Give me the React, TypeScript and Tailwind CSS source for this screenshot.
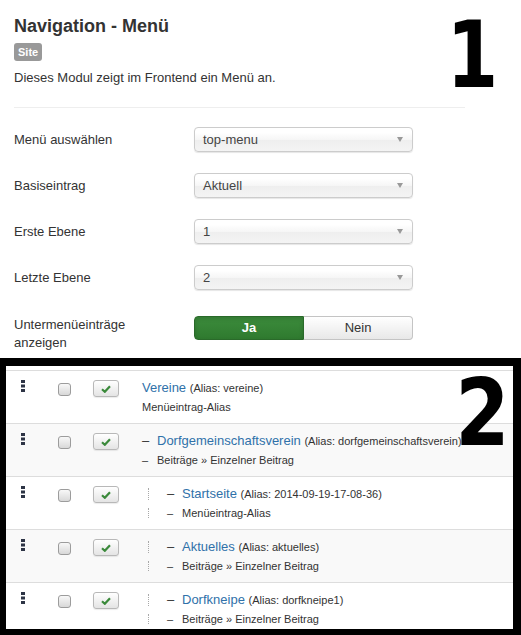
import React from "react";

type Row = {
  level: number;
  title: string;
  alias: string;
  type: string;
  striped: boolean;
};

const rows: Row[] = [
  { level: 1, title: "Vereine", alias: "vereine", type: "Menüeintrag-Alias", striped: false },
  { level: 2, title: "Dorfgemeinschaftsverein", alias: "dorfgemeinschaftsverein", type: "Beiträge » Einzelner Beitrag", striped: true },
  { level: 3, title: "Startseite", alias: "2014-09-19-17-08-36", type: "Menüeintrag-Alias", striped: false },
  { level: 3, title: "Aktuelles", alias: "aktuelles", type: "Beiträge » Einzelner Beitrag", striped: true },
  { level: 3, title: "Dorfkneipe", alias: "dorfkneipe1", type: "Beiträge » Einzelner Beitrag", striped: false },
];

function Select({ value }: { value: string }) {
  return (
    <div className="flex h-[25px] w-[219px] items-center rounded-[4px] border border-[#cccccc] bg-[linear-gradient(#ffffff_20%,#f6f6f6_50%,#eeeeee_52%,#f4f4f4_100%)] pl-[8px] pr-[9px] text-[13px] text-[#444444] shadow-[0_1px_1px_rgba(0,0,0,0.1)]">
      <span>{value}</span>
      <span className="ml-auto h-0 w-0 border-l-[3.5px] border-r-[3.5px] border-t-[5px] border-l-transparent border-r-transparent border-t-[#999999]" />
    </div>
  );
}

function Prefix({ level, small }: { level: number; small: boolean }) {
  if (level === 1) return null;
  const dash = (
    <span className={`inline-block w-[15px] text-[#333333] ${small ? "text-[11px]" : "text-[13px]"}`}>–</span>
  );
  if (level === 2) return dash;
  return (
    <>
      <span className="flex w-[25px] items-center pl-[6px]">
        <span className={`inline-block border-l border-dotted border-[#a8a8a8] ${small ? "h-[10px]" : "h-[12px]"}`} />
      </span>
      {dash}
    </>
  );
}

function Handle() {
  return (
    <svg width="4" height="12" viewBox="0 0 4 12">
      <rect x="0" y="0" width="4" height="3" fill="#2d3445" />
      <rect x="0" y="4.5" width="4" height="3" fill="#2d3445" />
      <rect x="0" y="9" width="4" height="3" fill="#2d3445" />
    </svg>
  );
}

function TableRow({ r }: { r: Row }) {
  return (
    <div className={`flex h-[53px] shrink-0 border-t border-[#dddddd] ${r.striped ? "bg-[#f9f9f9]" : "bg-white"}`}>
      <div className="ml-[15px] mt-[9px] h-[12px]">
        <Handle />
      </div>
      <div className="ml-[33px] mt-[12px] h-[13px] w-[13px] rounded-[3px] border border-[#9c9c9c] bg-[linear-gradient(#f8f8f8,#d8d8d8)]" />
      <div className="ml-[22px] mt-[9px] flex h-[17px] w-[26px] items-center justify-center rounded-[3px] border border-[#b8b8b8] bg-[linear-gradient(#ffffff,#e4e4e4)] shadow-[0_1px_1px_rgba(0,0,0,0.08)]">
        <svg width="10" height="8" viewBox="0 0 10 8">
          <path d="M1 4.3 L3.8 6.8 L9 1.2" fill="none" stroke="#3b8a3b" strokeWidth="2.2" />
        </svg>
      </div>
      <div className="ml-[23px] whitespace-nowrap pt-[7px]">
        <div className="flex h-[20px] items-center">
          <Prefix level={r.level} small={false} />
          <span className="leading-[20px]">
            <span className="text-[13px] text-[#3071a9]">{r.title}</span>{" "}
            <span className="text-[11px] text-[#333333]">(Alias: {r.alias})</span>
          </span>
        </div>
        <div className="flex h-[18px] items-center">
          <Prefix level={r.level} small={true} />
          <span className="text-[11px] leading-[18px] text-[#333333]">{r.type}</span>
        </div>
      </div>
    </div>
  );
}

export default function App() {
  const fields = [
    { label: "Menü auswählen", value: "top-menu" },
    { label: "Basiseintrag", value: "Aktuell" },
    { label: "Erste Ebene", value: "1" },
    { label: "Letzte Ebene", value: "2" },
  ];
  return (
    <div className="relative h-[635px] w-[521px] overflow-hidden bg-white font-['Liberation_Sans',Arial,sans-serif] text-[13px] text-[#333333]">
      <div className="px-[14px] pt-[16px]">
        <h1 className="text-[18px] font-bold leading-[20px] text-[#333333]">Navigation - Menü</h1>
        <div className="mt-[7px] flex h-[18px] w-fit items-center rounded-[3px] bg-[#999999] px-[4px] text-[11px] font-bold text-white">
          Site
        </div>
        <p className="mt-[8px] leading-[18px]">Dieses Modul zeigt im Frontend ein Menü an.</p>
        <div className="mt-[20px] w-[451px] border-t border-[#eeeeee]" />
        <div className="mt-[19px] flex flex-col">
          {fields.map((f) => (
            <div key={f.label} className="mb-[21px] flex h-[25px] items-center">
              <div className="w-[180px]">{f.label}</div>
              <Select value={f.value} />
            </div>
          ))}
          <div className="mt-[5px] flex items-start">
            <div className="w-[180px] leading-[18px]">
              Untermenüeinträge
              <br />
              anzeigen
            </div>
            <div className="flex h-[24px]">
              <div className="flex w-[110px] items-center justify-center rounded-l-[4px] border border-[#2a6a2a] bg-[linear-gradient(#3c8c3c,#2f7a2f)] text-[13px] font-bold text-white shadow-[inset_0_2px_4px_rgba(0,0,0,0.15)]">
                Ja
              </div>
              <div className="flex w-[109px] items-center justify-center rounded-r-[4px] border border-l-0 border-[#c4c4c4] bg-[linear-gradient(#ffffff,#e8e8e8)] text-[13px] text-[#333333]">
                Nein
              </div>
            </div>
          </div>
        </div>
      </div>

      <div className="mt-[6px] h-[277px] border-b-[6px] border-l-[6px] border-r-[8px] border-t-[8px] border-black">
        <div className="flex h-full flex-col overflow-hidden bg-white pt-[4px]">
          {rows.map((r) => (
            <TableRow key={r.title} r={r} />
          ))}
        </div>
      </div>

      <div className="absolute left-[440px] top-[9px] scale-x-[0.8] font-['DejaVu_Sans',sans-serif] text-[93px] font-bold leading-none text-black">
        1
      </div>
      <div className="absolute left-[450px] top-[367px] scale-x-[0.84] font-['DejaVu_Sans',sans-serif] text-[93px] font-bold leading-none text-black">
        2
      </div>
    </div>
  );
}
